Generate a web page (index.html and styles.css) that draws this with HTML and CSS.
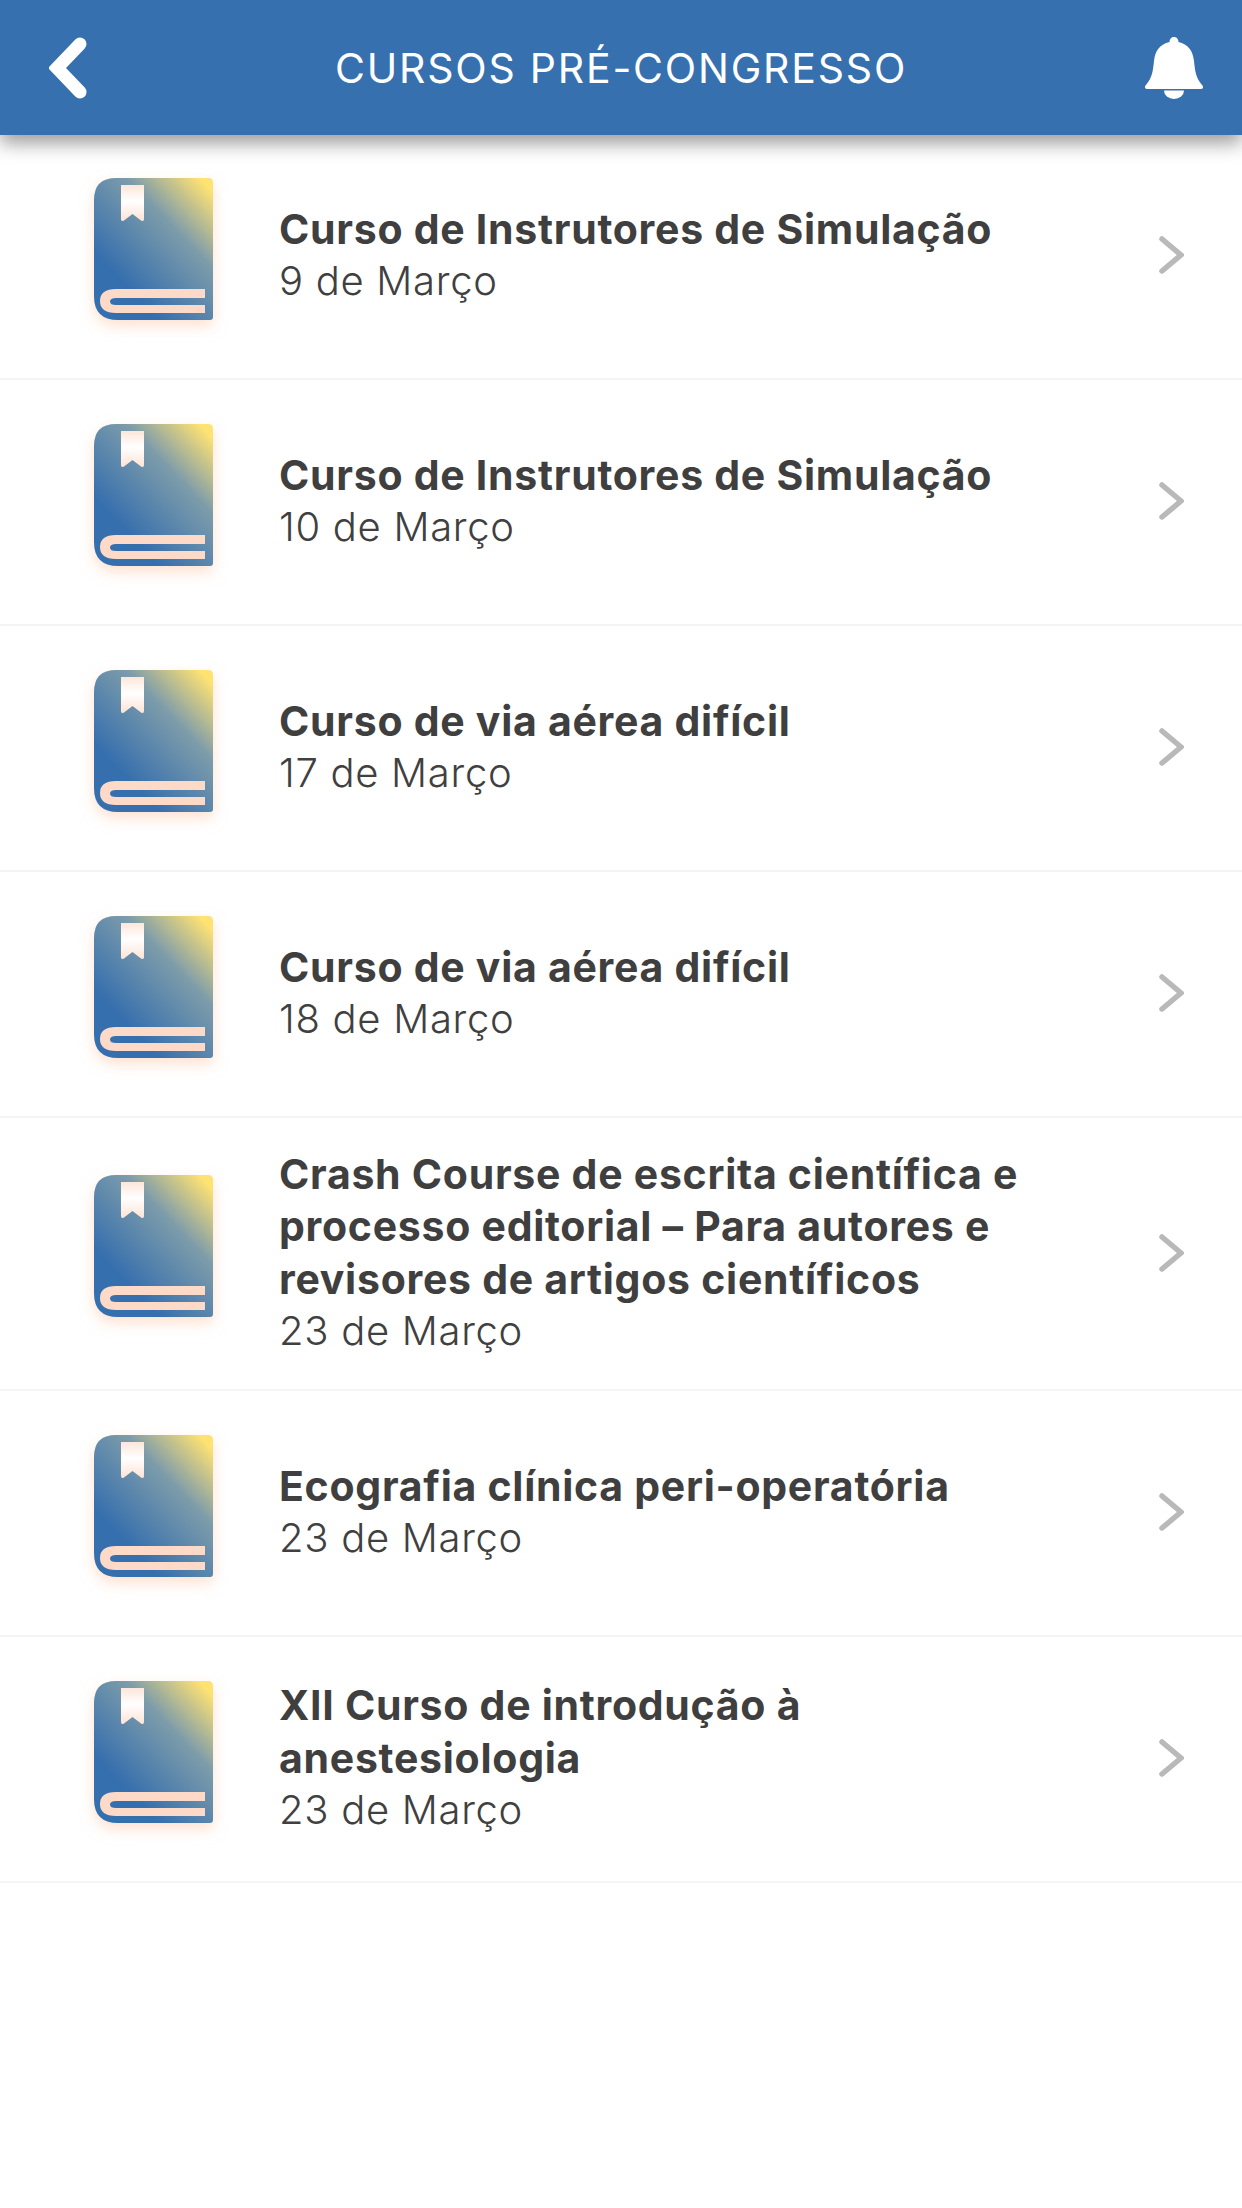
FILE: index.html
```html
<!DOCTYPE html>
<html lang="pt">
<head>
<meta charset="utf-8">
<title>Cursos pré-congresso</title>
<link rel="stylesheet" href="styles.css">
</head>
<body>
<svg class="defs" width="0" height="0" aria-hidden="true">
  <defs>
    <linearGradient id="cover" gradientUnits="userSpaceOnUse" x1="10" y1="100" x2="110" y2="5">
      <stop offset="0.08" stop-color="#366fae"/>
      <stop offset="0.62" stop-color="#7d9caa"/>
      <stop offset="1" stop-color="#fee272"/>
    </linearGradient>
    <linearGradient id="mark" x1="0" y1="0" x2="0" y2="1">
      <stop offset="0" stop-color="#fde6da"/>
      <stop offset="0.45" stop-color="#ffffff"/>
      <stop offset="1" stop-color="#fde3d6"/>
    </linearGradient>
    <symbol id="book" viewBox="0 0 119 142">
      <path fill="url(#cover)" d="M22 0H114Q119 0 119 5V139Q119 142 116 142H24Q0 142 0 118V22Q0 0 22 0Z"/>
      <path fill="url(#mark)" d="M27 7H50V41Q50 44 47 42.500L38.500 36L30 42.500Q27 44 27 41Z"/>
      <path fill="#fdd9c8" d="M111 111V120H22Q16 120 16 123.500Q16 127 22 127H111V135H22Q6 135 6 123Q6 111 22 111Z"/>
    </symbol>
  </defs>
</svg>
<header class="topbar">
  <svg class="back" viewBox="0 0 40 62"><path d="M31 7 8 31l23 24"/></svg>
  <h1 class="topbar-title">CURSOS PRÉ-CONGRESSO</h1>
  <svg class="bell" viewBox="0 0 58 62"><path d="M29 0C31.800 0 33.500 2 33.500 5C43 7 48 14 49 24C50 34 51 41 57 48C59 50 58 52 55 52H3C0 52-1 50 1 48C7 41 8 34 9 24C10 14 15 7 24.500 5C24.500 2 26.200 0 29 0Z"/><path d="M19 53.500H39A10 8.500 0 0 1 19 53.500Z"/></svg>
</header>
<main class="list">
  <a class="row">
    <svg class="book"><use href="#book"/></svg>
    <div class="text"><div class="name">Curso de Instrutores de Simulação</div><div class="date">9 de Março</div></div>
    <svg class="chev" viewBox="0 0 26 40"><path d="M4 4l19 16L4 36"/></svg>
  </a>
  <a class="row">
    <svg class="book"><use href="#book"/></svg>
    <div class="text"><div class="name">Curso de Instrutores de Simulação</div><div class="date">10 de Março</div></div>
    <svg class="chev" viewBox="0 0 26 40"><path d="M4 4l19 16L4 36"/></svg>
  </a>
  <a class="row">
    <svg class="book"><use href="#book"/></svg>
    <div class="text"><div class="name">Curso de via aérea difícil</div><div class="date">17 de Março</div></div>
    <svg class="chev" viewBox="0 0 26 40"><path d="M4 4l19 16L4 36"/></svg>
  </a>
  <a class="row">
    <svg class="book"><use href="#book"/></svg>
    <div class="text"><div class="name">Curso de via aérea difícil</div><div class="date">18 de Março</div></div>
    <svg class="chev" viewBox="0 0 26 40"><path d="M4 4l19 16L4 36"/></svg>
  </a>
  <a class="row">
    <svg class="book"><use href="#book"/></svg>
    <div class="text"><div class="name">Crash Course de escrita científica e<br>processo editorial – Para autores e<br>revisores de artigos científicos</div><div class="date">23 de Março</div></div>
    <svg class="chev" viewBox="0 0 26 40"><path d="M4 4l19 16L4 36"/></svg>
  </a>
  <a class="row">
    <svg class="book"><use href="#book"/></svg>
    <div class="text"><div class="name">Ecografia clínica peri-operatória</div><div class="date">23 de Março</div></div>
    <svg class="chev" viewBox="0 0 26 40"><path d="M4 4l19 16L4 36"/></svg>
  </a>
  <a class="row">
    <svg class="book"><use href="#book"/></svg>
    <div class="text"><div class="name">XII Curso de introdução à<br>anestesiologia</div><div class="date">23 de Março</div></div>
    <svg class="chev" viewBox="0 0 26 40"><path d="M4 4l19 16L4 36"/></svg>
  </a>
</main>
</body>
</html>
```
FILE: styles.css
```css
* { box-sizing: border-box; }
html, body { margin: 0; padding: 0; background: #fff; }
body { width: 1242px; height: 2208px; overflow: hidden; font-family: Inter, "Noto Sans", sans-serif; color: #3f3f3f; }
.defs { position: absolute; }
.topbar {
  position: relative;
  z-index: 1;
  height: 135px;
  background: #3670ae;
  box-shadow: 0 8px 18px rgba(0, 0, 0, .4);
  display: grid;
  grid-template-columns: 1fr auto 1fr;
  align-items: center;
  padding: 0 39px;
}
.topbar-title { margin: 0; font-size: 41px; font-weight: 400; color: #fff; letter-spacing: 1.8px; white-space: nowrap; }
.back { width: 40px; height: 62px; margin-left: 10px; }
.back path { fill: none; stroke: #fff; stroke-width: 13; stroke-linecap: round; stroke-linejoin: miter; }
.bell { width: 58px; height: 62px; justify-self: end; fill: #fff; }
.list { margin-top: -1.5px; }
.row {
  display: flex;
  align-items: center;
  min-height: 246px;
  padding: 30px 58px 31px 94px;
  border-bottom: 2px solid #f4f4f4;
}
.book { flex: none; width: 119px; height: 142px; margin: 0 66px 13px 0; filter: drop-shadow(0 6px 7px rgba(253, 200, 170, .55)); overflow: visible; }
.text { flex: 1; }
.name { font-size: 41px; font-weight: 700; line-height: 52.500px; letter-spacing: .72px; color: #3f3f3f; }
.date { font-size: 40px; font-weight: 300; line-height: 52.500px; letter-spacing: .7px; color: #404040; }
.chev { flex: none; width: 26px; height: 40px; }
.chev path { fill: none; stroke: #b9b9b9; stroke-width: 5.500; stroke-linecap: round; stroke-linejoin: miter; }
```
